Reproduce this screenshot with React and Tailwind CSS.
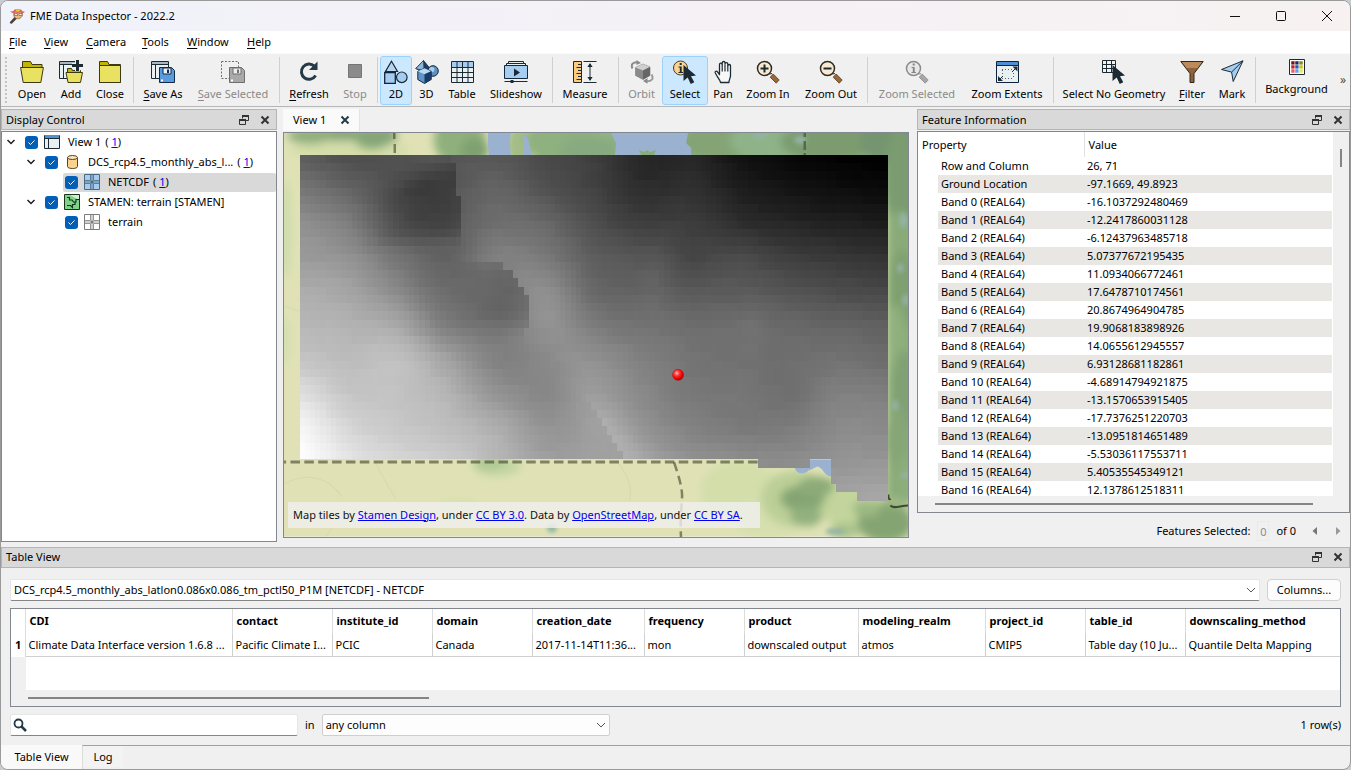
import React, { useMemo } from 'react';
import clsx from 'clsx';

/* ---------- toolbar drawings ---------- */

const INK = '#1c2b33';

function Svg({ children, size = 24, className }) {
  return (
    <svg
      width={size}
      height={size}
      viewBox={`0 0 ${size} ${size}`}
      fill="none"
      aria-hidden="true"
      className={clsx('block shrink-0', className)}
    >
      {children}
    </svg>
  );
}

const OpenIcon = () => (
  <Svg>
    <path d="M2.5 8V1.5h8l1.5 3h10V8" fill="#c4b400" stroke="#3b3a12" />
    <path d="M.6 7.5h22.8l-2.6 15H3.2z" fill="#e9e261" stroke="#3b3a12" />
  </Svg>
);

const CloseIcon = () => (
  <Svg>
    <path d="M1.5 22.5v-21h8l1.5 3h11.500v18z" fill="#c4b400" stroke="#3b3a12" />
    <path d="M1.500 5.500h21v17h-21z" fill="#e9e261" stroke="#3b3a12" />
  </Svg>
);

const AddIcon = () => (
  <Svg>
    <path d="M.5 1.500h17v17H.5z" fill="#e9f0f2" stroke={INK} />
    <path d="M1 2h16v2.500H1z" fill="#a9b6bf" />
    <path d="M.5 4.500h17M4.500 4.500v14" stroke={INK} />
    <path d="M8.500 12V8.500h4l1 2h8V12" fill="#c4b400" stroke="#3b3a12" />
    <path d="M7 12.500h16.500l-2 10H9z" fill="#e9e261" stroke="#3b3a12" />
    <path d="M13 5.500h11M18.500 0v11" stroke="#f0f0f0" strokeWidth="5" />
    <path d="M13 5.500h11M18.500 0v11" stroke={INK} strokeWidth="3" />
  </Svg>
);

const Floppy = ({ body, edge, label }) => (
  <>
    <path d="M8.500 7.500h12l3 3v12h-15z" fill={body} stroke={edge} />
    <path d="M12 8h8v6h-8z" fill={label} stroke={edge} />
    <path d="M16 9.500h2v3.500h-2z" fill={edge} />
    <path d="M10 19.500h2v2h-2z" fill="#fff" />
  </>
);

const SaveAsIcon = () => (
  <Svg>
    <path d="M.5 1.500h17v17H.5z" fill="#e9f0f2" stroke={INK} />
    <path d="M1 2h16v2.500H1z" fill="#a9b6bf" />
    <path d="M.5 4.500h17M4.500 4.500v14" stroke={INK} />
    <Floppy body="#5a9bdc" edge="#0f2a4a" label="#eef3f7" />
  </Svg>
);

const SaveSelectedIcon = () => (
  <Svg>
    <path d="M.5 1.500h17v17H.5z" stroke="#6f6f6f" strokeDasharray="2 1.500" />
    <Floppy body="#a9a9a9" edge="#6f6f6f" label="#ededed" />
  </Svg>
);

const RefreshIcon = () => (
  <Svg>
    <path d="M18.600 15.500A7.600 7.600 0 1 1 17.300 6.200" stroke="#253a47" strokeWidth="3" />
    <path d="M20.500 1.500v8.500H12z" fill="#253a47" />
  </Svg>
);

const StopIcon = () => (
  <Svg>
    <path d="M5.500 4.500h13v13h-13z" fill="#8b8b8b" stroke="#757575" />
  </Svg>
);

const TwoDIcon = () => (
  <Svg>
    <path d="M7.500 1.300 13.500 11.500h-12z" fill="#b8d6ef" stroke={INK} strokeWidth="1.200" />
    <path d="M.7 12.700h10.600v10.600H.7z" fill="#a5cdf2" stroke="#12233a" strokeWidth="1.300" />
    <circle cx="17.800" cy="17.300" r="5.300" fill="#a5cdf2" stroke={INK} strokeWidth="1.200" />
  </Svg>
);

const ThreeDIcon = () => (
  <Svg>
    <path d="M8.500.5 15 8.500 8 12 .8 8.500z" fill="#1d3f66" stroke="#13283c" strokeWidth=".8" />
    <path d="M8.500.5 9 11 .8 8.500z" fill="#8cb7dd" stroke="#13283c" strokeWidth=".6" />
    <circle cx="18" cy="11" r="5.300" fill="#5d8fc0" stroke="#13283c" />
    <circle cx="16.800" cy="9.600" r="2.600" fill="#a9cdeb" />
    <path d="M2.800 11.300 9.500 8.200l6.700 3.100v8.200l-6.700 4-6.700-4z" fill="#5f94ca" stroke="#13283c" />
    <path d="M2.800 11.300 9.500 14.300l6.700-3-6.700-3.100z" fill="#b9daf3" />
    <path d="M9.500 14.300v9.200l6.700-4v-8.200z" fill="#173a66" />
  </Svg>
);

const TableIcon = () => (
  <Svg>
    <path d="M1.500 1.500h22v21h-22z" fill="#e9f0f2" />
    <path d="M1.500 1.500h22v6h-22z" fill="#a5cdf2" />
    <path
      d="M1.500 1.500h22v21h-22zM1.500 7.500h22M1.500 12.500h22M1.500 17.500h22M7 1.500v21M12.500 1.500v21M18 1.500v21"
      stroke={INK}
    />
  </Svg>
);

const SlideshowIcon = () => (
  <Svg>
    <path d="M4.500 3.500v-2h15v2M2.500 5.500v-2h19v2" fill="#e9f0f2" stroke={INK} />
    <path d="M.5 5.500h23v13H.5z" fill="#a5cdf2" stroke="#13283c" />
    <path d="m10 8.500 6 4-6 4z" fill={INK} />
    <path d="M.5 21.500h23" stroke={INK} />
    <path d="M6.500 20h3v3h-3z" fill={INK} />
  </Svg>
);

const MeasureIcon = () => (
  <Svg>
    <path d="M.5 1.500h8v21h-8z" fill="#fccb7c" stroke={INK} />
    <path d="M5 4.500h3.500M3.500 7.500h5M5 10.500h3.500M3.500 13.500h5M5 16.500h3.500M3.500 19.500h5" stroke={INK} />
    <path d="M10.500 1.500h13M10.500 22.500h13M17 4v16" stroke={INK} />
    <path d="m17 3 2.600 4h-5.200zM17 21l2.600-4h-5.200z" fill={INK} />
  </Svg>
);

const OrbitIcon = () => (
  <Svg>
    <path d="M5.500 7.500 13 4l7 3v8.500l-7 4-7.500-4z" fill="#8a8a8a" stroke="#777" strokeWidth=".6" />
    <path d="M5.500 7.500 13 4l7 3-7 3.500z" fill="#cfcfcf" />
    <path d="M13 10.500v9l7-4V7z" fill="#666" />
    <path d="M2.500 8.500C.5 4.500 3 1.800 8 2.200" stroke="#8a8a8a" strokeWidth="2" />
    <path d="M6.500 0 11 3 6.500 5z" fill="#8a8a8a" />
    <path d="M21.500 14.500c2.500 4 .5 7-5 6.800" stroke="#9a9a9a" strokeWidth="2" />
    <path d="M17.500 18v5.800L13 21z" fill="#8a8a8a" />
  </Svg>
);

const Cursor = () => (
  <path d="M10.500 5 23 15.500l-5 .7 3.300 6.100-3.600 1.600-3-6.300-4.200 3.300z" fill={INK} />
);

const SelectIcon = () => (
  <Svg>
    <circle cx="7.500" cy="8" r="7" fill="#fbd28f" stroke="#4a3b23" />
    <path d="M6.700 3h2v2h-2zM5.500 6.500h3.200V12H10v1H5.500v-1h1.300V7.500H5.500z" fill={INK} />
    <Cursor />
  </Svg>
);

const PanIcon = () => (
  <Svg>
    <path
      d="M8 22.500c-.3-2.300-1.500-3.500-2.800-5.300L2.700 12.800c-.6-1.500 1.400-2.300 2.300-1l2 2.800V4.500c0-1.900 2.600-1.900 2.700 0V3c0-2 2.800-2 2.800 0v1c.1-2 2.800-1.800 2.800.1v1.600c.2-1.700 2.700-1.600 2.700.3v9.500c0 2.700-1.500 4-1.600 7z"
      transform="translate(1.500 0)"
      fill="#f7f8f8"
      stroke={INK}
      strokeWidth="1.300"
      strokeLinejoin="round"
    />
    <path d="M11.200 4.500v7M14 4.500v7M16.800 5.500v6" stroke={INK} strokeWidth="1.200" />
  </Svg>
);

function Magnifier({ children, rim = '#2f2a25', glass = '#f8ead0', handle = '#96683c', edge = '#5a3c1e' }) {
  return (
    <Svg>
      <circle cx="8.500" cy="8.500" r="7" fill={glass} stroke={rim} strokeWidth="1.500" />
      <path d="m13.500 14 2.500-.5" stroke={rim} strokeWidth="1.200" />
      <path d="m17.200 14 6 6-3 3.200-6-6z" fill={handle} stroke={edge} strokeWidth=".8" />
      {children}
    </Svg>
  );
}

const ZoomInIcon = () => (
  <Magnifier>
    <path d="M4.500 8.500h8M8.500 4.500v8" stroke={INK} strokeWidth="2" />
  </Magnifier>
);

const ZoomOutIcon = () => (
  <Magnifier>
    <path d="M4.500 8.500h8" stroke={INK} strokeWidth="2" />
  </Magnifier>
);

const ZoomSelectedIcon = () => (
  <Magnifier rim="#8b8b8b" glass="#e8e8e8" handle="#a6a6a6" edge="#8b8b8b">
    <path d="M7.700 3.500h2v2h-2zM6.500 7h3.200v5H11v1H6.500v-1h1.300V8H6.500z" fill="#858585" />
  </Magnifier>
);

const ZoomExtentsIcon = () => (
  <Svg>
    <path d="M1.500 1.500h22v21h-22z" fill="#e9f0f2" stroke="#10233c" />
    <path d="M2 2h21v3H2z" fill="#4f8fd6" />
    <path d="M1.500 5.500h22" stroke="#10233c" />
    <path d="M7 9.500h10M18.500 10v8M7 18.500h10M7.500 10v8" stroke="#55636c" strokeDasharray="1 2" />
    <path d="M17.500 6.500h5v5zM3 16v5h5z" fill={INK} />
    <path d="m17 12 4-4M4 20l4-4" stroke={INK} />
  </Svg>
);

const SelectNoGeometryIcon = () => (
  <Svg>
    <path d="M.5.500h13v12H.5z" fill="#f2f2f2" />
    <path d="M.5.500h13v12H.5zM.5 4.500h13M.5 8.500h13M4.500.500v12M9.500.500v12" stroke={INK} />
    <Cursor />
  </Svg>
);

const FilterIcon = () => (
  <Svg>
    <path d="M.8 1.500h22.400L14 13.500v9h-4v-9z" fill="#8e623a" />
    <path d="M1.500 1.500h21L18 8H6z" fill="#bb8b5c" />
    <path d="M.8 1.500h22.400L14 13.500v9h-4v-9z" stroke="#33261a" />
  </Svg>
);

const MarkIcon = () => (
  <Svg>
    <path d="M23 .8 13.200 21.500l-1.600-9.400L1.500 9.500z" fill="#a5cdf2" stroke={INK} strokeLinejoin="round" />
    <path d="M23 .8 11.600 12.100" stroke={INK} />
  </Svg>
);

const SWATCHES = [
  ['#7c0f12', '#16305f', '#8e8a12'],
  ['#c22327', '#1f5fae', '#cfc322'],
  ['#f25c5c', '#5ba1ec', '#ede55a'],
];

const BackgroundIcon = () => (
  <Svg size={16}>
    <path d="M.5.500h15v15H.5z" fill="#fff" stroke={INK} />
    {SWATCHES.flatMap((row, r) =>
      row.map((color, c) => (
        <rect key={color} x={2 + c * 4} y={2 + r * 4} width="4" height="4" fill={color} stroke="#fff" strokeWidth=".5" />
      )),
    )}
  </Svg>
);

/* ---------- toolbar ---------- */

const TOOLS = [
  { label: 'Open', icon: OpenIcon, width: 'w-[40px]' },
  { label: 'Add', icon: AddIcon, width: 'w-[38px]' },
  { label: 'Close', icon: CloseIcon, width: 'w-[40px]' },
  null,
  { label: 'Save As', icon: SaveAsIcon, width: 'w-[54px]', key: true },
  { label: 'Save Selected', icon: SaveSelectedIcon, width: 'w-[86px]', key: true, off: true },
  null,
  { label: 'Refresh', icon: RefreshIcon, width: 'w-[54px]', key: true },
  { label: 'Stop', icon: StopIcon, width: 'w-[38px]', off: true },
  null,
  { label: '2D', icon: TwoDIcon, width: 'w-[32px]', on: true },
  { label: '3D', icon: ThreeDIcon, width: 'w-[29px]' },
  { label: 'Table', icon: TableIcon, width: 'w-[42px]' },
  { label: 'Slideshow', icon: SlideshowIcon, width: 'w-[66px]' },
  null,
  { label: 'Measure', icon: MeasureIcon, width: 'w-[60px]' },
  null,
  { label: 'Orbit', icon: OrbitIcon, width: 'w-[41px]', off: true },
  { label: 'Select', icon: SelectIcon, width: 'w-[46px]', on: true },
  { label: 'Pan', icon: PanIcon, width: 'w-[30px]' },
  { label: 'Zoom In', icon: ZoomInIcon, width: 'w-[60px]' },
  { label: 'Zoom Out', icon: ZoomOutIcon, width: 'w-[66px]' },
  null,
  { label: 'Zoom Selected', icon: ZoomSelectedIcon, width: 'w-[94px]', off: true },
  { label: 'Zoom Extents', icon: ZoomExtentsIcon, width: 'w-[86px]' },
  null,
  { label: 'Select No Geometry', icon: SelectNoGeometryIcon, width: 'w-[116px]' },
  { label: 'Filter', icon: FilterIcon, width: 'w-[40px]', key: true },
  { label: 'Mark', icon: MarkIcon, width: 'w-[40px]' },
  null,
  { label: 'Background', icon: BackgroundIcon, width: 'w-[77px]', small: true },
];

function Mnemonic({ text }) {
  return (
    <span>
      <span className="underline underline-offset-2">{text[0]}</span>
      {text.slice(1)}
    </span>
  );
}

function Tool({ tool }) {
  const Icon = tool.icon;
  return (
    <button
      type="button"
      disabled={tool.off}
      aria-pressed={tool.on}
      className={clsx(
        'flex h-[49px] shrink-0 flex-col items-center rounded-[3px] border whitespace-nowrap',
        tool.width,
        tool.small ? 'gap-1.5 pt-0.5' : 'gap-0.5 pt-[3px]',
        tool.on ? 'border-[#99d1ff] bg-[#cce8ff]' : 'border-transparent',
        tool.off ? 'text-[#8a8a8a]' : 'text-black',
      )}
    >
      <Icon />
      {tool.key ? <Mnemonic text={tool.label} /> : tool.label}
    </button>
  );
}

function Toolbar() {
  return (
    <div
      role="toolbar"
      className="flex h-[54px] shrink-0 items-center overflow-hidden border-t border-b border-t-[#fafafa] border-b-[#b6b6b6] bg-[#f0f0f0] pr-1 pl-1"
    >
      <span className="mr-[4px] h-[46px] w-[3px] shrink-0 border-l-2 border-dotted border-[#c2c2c2]" />
      {TOOLS.map((tool, i) =>
        tool ? (
          <Tool key={tool.label} tool={tool} />
        ) : (
          <span key={i} className="flex h-[46px] w-[6px] shrink-0 justify-center">
            <span className="w-px bg-[#d0d0d0]" />
          </span>
        ),
      )}
      <button type="button" aria-label="More tools" className="ml-auto text-[12px] text-[#4a4a4a]">
        »
      </button>
    </div>
  );
}

/* ---------- window chrome ---------- */

const AppIcon = () => (
  <Svg size={16}>
    <path d="m1 14 5-5.500 2 2L3 15.500c-1 .8-2.800-.5-2-1.500z" fill="#4a4038" />
    <circle cx="9" cy="6.500" r="4.300" fill="#f3bd98" stroke="#7b6a5c" strokeWidth=".8" />
    <path d="M.8 3.500 4 3.200 5.500 1.500l3-.5 3.500.5 1.500 1.700 2.500.6-2 1.500-3-.8-2 .4-2.500-.4-2.500.8z" fill="#d9695a" />
    <path d="M6.500 1.500h5L10 3.500H7.500z" fill="#f4d03c" />
    <path d="M5.500 5.500h3v2h-3zM10 5.500h3v2h-3z" fill="#fbf3dc" stroke="#8a3b2a" strokeWidth=".6" />
    <path d="M7 8.800h4.500l-2.200 2z" fill="#e4bd2c" />
  </Svg>
);

const FloatIcon = () => (
  <Svg size={10}>
    <path d="M3.500 3.500v-3h6v5h-3" stroke="#333" />
    <path d="M3 1h7" stroke="#333" strokeWidth="2" />
    <path d="M.5 4.500h6v5h-6z" stroke="#333" />
    <path d="M0 5h7" stroke="#333" strokeWidth="2" />
  </Svg>
);

const CrossIcon = ({ color = '#333' }) => (
  <Svg size={10}>
    <path d="m1.500 1.500 7 7M8.500 1.500l-7 7" stroke={color} strokeWidth="2" />
  </Svg>
);

function TitleBar() {
  return (
    <header className="flex h-[30px] shrink-0 items-center bg-linear-to-r from-[#f0f3fa] via-[#f5f1f6] to-[#f7f2f1] pr-[17px] pl-2">
      <AppIcon />
      <h1 className="ml-[5px] grow">FME Data Inspector - 2022.2</h1>
      <div className="flex items-center gap-[34px]">
        <button type="button" aria-label="Minimize">
          <Svg size={12}>
            <path d="M1 6.500h10" stroke="#111" />
          </Svg>
        </button>
        <button type="button" aria-label="Maximize">
          <Svg size={12}>
            <rect x="1.500" y="1.500" width="9" height="9" rx="1" stroke="#111" />
          </Svg>
        </button>
        <button type="button" aria-label="Close window">
          <Svg size={12}>
            <path d="m1 1 10 10M11 1 1 11" stroke="#111" />
          </Svg>
        </button>
      </div>
    </header>
  );
}

const MENUS = [
  ['File', 'w-[35px]'],
  ['View', 'w-[42px]'],
  ['Camera', 'w-[56px]'],
  ['Tools', 'w-[45px]'],
  ['Window', 'w-[60px]'],
  ['Help', 'w-[40px]'],
];

function MenuBar() {
  return (
    <nav className="flex h-[22px] shrink-0 items-center bg-white pl-2">
      {MENUS.map(([name, width]) => (
        <button key={name} type="button" className={clsx('text-left', width)}>
          <Mnemonic text={name} />
        </button>
      ))}
    </nav>
  );
}

function DockTitle({ children }) {
  return (
    <div className="flex h-[21px] shrink-0 items-center gap-[11px] border border-[#b5b5b5] bg-[#d9d9d9] pr-[6px] pl-1">
      <h2 className="grow">{children}</h2>
      <button type="button" aria-label={`Float ${children}`}>
        <FloatIcon />
      </button>
      <button type="button" aria-label={`Close ${children}`}>
        <CrossIcon />
      </button>
    </div>
  );
}

/* ---------- display control ---------- */

const Chevron = ({ color = '#1f1f1f', size = 10 }) => (
  <Svg size={size}>
    <path d="m1.500 3 3.500 3.500L8.500 3" stroke={color} strokeWidth="1.500" />
  </Svg>
);

const ViewIcon = () => (
  <Svg size={16}>
    <path d="M.5 1.500h15v13H.5z" fill="#e9f0f2" stroke={INK} />
    <path d="M1 1h14v3H1z" fill="#4f8fd6" />
    <path d="M.5 4.500h15M4.500 4.500v10" stroke={INK} />
  </Svg>
);

const DatasetIcon = () => (
  <Svg size={16}>
    <path d="M3.500 3.500v9c0 2.700 10 2.700 10 0v-9z" fill="#fbd28f" stroke="#5a4322" />
    <ellipse cx="8.500" cy="3.500" rx="5" ry="2" fill="#fde3b6" stroke="#5a4322" />
  </Svg>
);

const TerrainIcon = () => (
  <Svg size={16}>
    <path d="M.5.500h15v15H.5z" fill="#7fd48a" stroke="#16351c" />
    <path d="M6 1h9v5z" fill="#d3eed4" />
    <path
      d="M3 3.500h2.500V6H8l1.500 2H12V5.500h3M3 11.500h3.500l2 2v-3h2.500V8"
      stroke="#16351c"
      strokeWidth="1.200"
    />
  </Svg>
);

const RasterIcon = ({ fill, line, edge }) => (
  <Svg size={16}>
    <path d="M.5.500h15v15H.5z" fill={fill} stroke={edge} />
    <path d="M6.500 0v6.500H0M9.500 0v6.500H16M0 9.500h6.500V16M16 9.500H9.500V16" stroke={edge} strokeWidth=".8" />
    <path d="M8 1v14M1 8h14" stroke={line} strokeWidth="2" />
    <circle cx="8" cy="8" r="1.500" fill={edge} />
  </Svg>
);

const TREE = [
  { id: 'view', label: 'View 1', count: 1, indent: 'pl-1', icon: <ViewIcon />, open: true },
  { id: 'dcs', label: 'DCS_rcp4.5_monthly_abs_l...', count: 1, indent: 'pl-6', icon: <DatasetIcon />, open: true },
  {
    id: 'netcdf',
    label: 'NETCDF',
    count: 1,
    indent: 'pl-11',
    icon: <RasterIcon fill="#a5cdf2" line="#7fa5c2" edge="#4b6a80" />,
    selected: true,
  },
  { id: 'stamen', label: 'STAMEN: terrain [STAMEN]', indent: 'pl-6', icon: <TerrainIcon />, open: true },
  { id: 'terrain', label: 'terrain', indent: 'pl-11', icon: <RasterIcon fill="#fff" line="#cfcfcf" edge="#7b7b7b" /> },
];

function TreeRow({ node }) {
  return (
    <li className={clsx('flex h-5 items-center', node.indent)}>
      <span className="flex w-[17px] shrink-0 justify-start">
        {node.open && (
          <button type="button" aria-label={`Collapse ${node.label}`}>
            <Chevron />
          </button>
        )}
      </span>
      <div
        className={clsx(
          'flex h-[19px] min-w-0 grow items-center rounded-[2px] pl-[2px] whitespace-nowrap',
          node.selected && 'bg-[#d9d9d9]',
        )}
      >
        <span className="relative flex shrink-0">
          <input
            id={`tree-${node.id}`}
            type="checkbox"
            defaultChecked
            className="size-[13px] appearance-none rounded-[3px] bg-[#005fb8]"
          />
          <svg
            viewBox="0 0 13 13"
            fill="none"
            aria-hidden="true"
            className="pointer-events-none absolute inset-0 size-[13px]"
          >
            <path d="m3.500 6.500 2 2 4-4" stroke="#fff" />
          </svg>
        </span>
        <label htmlFor={`tree-${node.id}`} className="ml-[6px] flex items-center gap-2">
          {node.icon}
          {node.label}
        </label>
        {node.count && (
          <span className="ml-[4px]">
            ({' '}
            <a href="#features" className="text-[#0000ee] underline">
              {node.count}
            </a>
            )
          </span>
        )}
      </div>
    </li>
  );
}

function DisplayControl() {
  return (
    <section className="flex w-[276px] shrink-0 flex-col gap-px">
      <DockTitle>Display Control</DockTitle>
      <ul className="grow border border-[#828790] bg-white">
        {TREE.map((node) => (
          <TreeRow key={node.id} node={node} />
        ))}
      </ul>
    </section>
  );
}

/* ---------- map ---------- */

const RASTER = { x: 300, y: 155, cols: 113, rows: 42, cw: 588 / 113, ch: 304 / 37 };

// Grey levels sampled every 49 units across and 34 units down.
const LEVELS = [
  [92, 78, 80, 86, 86, 74, 62, 38, 38, 18, 8, 2, 0],
  [118, 100, 84, 86, 100, 82, 66, 46, 48, 30, 20, 14, 10],
  [144, 125, 98, 92, 110, 104, 78, 62, 62, 46, 38, 32, 28],
  [154, 146, 116, 98, 126, 120, 94, 84, 74, 74, 62, 56, 50],
  [172, 164, 138, 108, 124, 138, 104, 98, 92, 90, 84, 76, 72],
  [184, 178, 168, 126, 124, 142, 122, 114, 110, 108, 104, 100, 96],
  [196, 188, 192, 162, 130, 136, 140, 128, 116, 112, 110, 114, 108],
  [222, 198, 194, 180, 148, 136, 150, 136, 120, 118, 112, 128, 126],
  [246, 214, 200, 190, 174, 148, 156, 144, 130, 122, 124, 138, 138],
  [255, 230, 214, 204, 184, 160, 160, 156, 146, 142, 140, 148, 150],
  [255, 240, 220, 210, 190, 165, 170, 165, 155, 150, 152, 162, 166],
];

const clamp = (v, lo, hi) => Math.min(hi, Math.max(lo, v));

const ramp = (a, b, v) => {
  const t = clamp((v - a) / (b - a), 0, 1);
  return t * t * (3 - 2 * t);
};

const spline = (a, b, c, d, t) =>
  b + 0.5 * t * (c - a + t * (2 * a - 5 * b + 4 * c - d + t * (3 * (b - c) + d - a)));

function baseLevel(x, y) {
  const gx = (x - 300) / 49;
  const gy = (y - 155) / 34;
  const ix = Math.floor(gx);
  const iy = Math.floor(gy);
  const row = (r) => {
    const line = LEVELS[clamp(r, 0, LEVELS.length - 1)];
    const at = (c) => line[clamp(c, 0, 12)];
    return spline(at(ix - 1), at(ix), at(ix + 1), at(ix + 2), gx - ix);
  };
  return spline(row(iy - 1), row(iy), row(iy + 1), row(iy + 2), gy - iy);
}

function level(x, y) {
  let v = baseLevel(x, y);
  // northern upland
  const northEdge = y < 163 ? 452 : y < 195 ? 457 : 462;
  if (x < northEdge) {
    const reach = ramp(350, 430, x + (y - 190) * 0.2) * ramp(156, 186, y + (x - 430) * 0.35);
    v -= 25 * reach * (1 - ramp(222, 252, y + (x - 440) * 0.1));
  }
  // southern upland
  const southEdge = y < 262 ? 0 : y < 270 ? 505 : y < 279 ? 511 : y < 287 ? 521 : y < 295 ? 526 : y < 329 ? 531 : 525;
  if (x < southEdge) {
    v -= 30 * ramp(445, 520, x + (y - 290) * 0.1) * (1 - ramp(305, 345, y)) * (0.8 + 0.2 * ramp(262, 275, y));
  }
  // valley running south-east
  const axis = y < 300 ? 508 + (y - 245) * 0.7 : y < 380 ? 546 + (y - 300) * 0.4 : 578 + (y - 380) * 0.58;
  const d = x - axis;
  v += ramp(225, 310, y) * (d < 0 ? 5 * Math.exp(-(d * d) / 260) : 6 * Math.exp(-(d * d) / 1400));
  if (y > 390) v += ramp(390, 430, y) * (d >= 0 ? 14 * Math.exp(-(d * d) / 700) : 0);
  // central lowland
  v -= 4 * Math.exp(-((x - 692) ** 2 / 300 + (y - 268) ** 2 / 1800));
  v += 6 * Math.exp(-((x - 656) ** 2 / 200 + (y - 275) ** 2 / 1600));
  v += 5 * Math.exp(-((x - 752) ** 2 / 200 + (y - 325) ** 2 / 900));
  const grain = ((Math.round(x) * 7 + Math.round(y) * 13) % 5) - 2;
  return Math.round(clamp(v + grain * 0.5, 0, 255));
}

function inCoverage(col, row) {
  const x = RASTER.x + (col + 0.5) * RASTER.cw;
  if (row < 37) return true;
  if (row === 37) return (x > 760 && x < 809) || x > 830;
  if (row < 40) return x > 830;
  if (row === 40) return x > 836;
  return x > 857;
}

function RasterLayer() {
  const cells = useMemo(() => {
    const out = [];
    for (let r = 0; r < RASTER.rows; r += 1) {
      for (let c = 0; c < RASTER.cols; c += 1) {
        if (!inCoverage(c, r)) continue;
        const x = RASTER.x + c * RASTER.cw;
        const y = RASTER.y + r * RASTER.ch;
        const g = level(x + RASTER.cw / 2, y + RASTER.ch / 2);
        out.push(
          <rect key={`${c}-${r}`} x={x} y={y} width={RASTER.cw} height={RASTER.ch} fill={`rgb(${g},${g},${g})`} />,
        );
      }
    }
    return out;
  }, []);
  return <g shapeRendering="crispEdges">{cells}</g>;
}

const FOREST = [
  [340, 134, 50, 7, '#86a677'], [310, 136, 22, 8, '#8fae7c'], [372, 142, 16, 8, '#8fb07f'], [378, 136, 20, 10, '#86a677'],
  [460, 140, 26, 26, '#8fb07d'], [475, 150, 14, 12, '#7fa070'], [520, 145, 14, 20, '#a2bd85'], [560, 140, 34, 22, '#8fb07f'],
  [590, 150, 30, 14, '#88aa80'], [645, 153, 10, 3, '#86a677'], [720, 142, 40, 20, '#84a476'], [770, 140, 40, 22, '#8fb388'],
  [830, 142, 50, 20, '#7c9c70'], [890, 140, 30, 26, '#759470'], [900, 180, 18, 50, '#7a9c70'], [898, 240, 12, 30, '#8aab78'],
  [902, 290, 14, 40, '#7fa070'], [896, 340, 10, 36, '#8fb07d'], [904, 390, 12, 40, '#7fa173'], [896, 440, 12, 34, '#86a677'],
  [905, 480, 10, 26, '#8cae7a'], [802, 498, 22, 13, '#84a572'], [816, 486, 18, 10, '#8cab78'], [806, 516, 16, 10, '#92b17e'],
  [885, 522, 28, 20, '#84a572'], [866, 508, 14, 8, '#9dba84'], [845, 530, 14, 8, '#a8c28c'],
];

const PASTURE = [
  [350, 150, 60, 10, '#d3ddaa'], [286, 230, 6, 50, '#cddcaa'], [284, 340, 8, 24, '#d6dfb0'], [497, 466, 24, 10, '#c3d6a2'],
  [490, 462, 16, 7, '#aec791'], [740, 490, 40, 30, '#d3deab'], [770, 515, 40, 22, '#d6dfae'], [860, 500, 40, 34, '#c3d59c'],
  [460, 505, 20, 8, '#d8e0b0'], [795, 498, 34, 28, '#bccf97'],
];

const PONDS = [
  [800, 140, 6, 4], [760, 136, 8, 3], [903, 220, 4, 8], [900, 268, 3, 5], [905, 300, 3, 6], [895, 405, 3, 5],
  [905, 475, 5, 3], [552, 528, 5, 4], [835, 531, 10, 3],
];

function MapCanvas() {
  return (
    <svg
      viewBox="284 133 624 403"
      preserveAspectRatio="xMidYMid slice"
      role="img"
      aria-label="Map of monthly values over terrain"
      className="absolute inset-0 size-full"
    >
      <defs>
        <filter id="soft" x="-50%" y="-50%" width="200%" height="200%">
          <feGaussianBlur stdDeviation="4" />
        </filter>
        <filter id="fine" x="-50%" y="-50%" width="200%" height="200%">
          <feGaussianBlur stdDeviation="2" />
        </filter>
        <radialGradient id="marker" cx="38%" cy="35%" r="65%">
          <stop offset="0" stopColor="#ffb3b3" />
          <stop offset=".4" stopColor="#ff3030" />
          <stop offset=".75" stopColor="#f00000" />
          <stop offset="1" stopColor="#a80000" />
        </radialGradient>
      </defs>
      <rect x="284" y="133" width="624" height="403" fill="#e0e2b5" />
      <g filter="url(#soft)">
        {PASTURE.map(([cx, cy, rx, ry, fill]) => (
          <ellipse key={`${cx}-${cy}`} cx={cx} cy={cy} rx={rx} ry={ry} fill={fill} />
        ))}
        <rect x="535" y="120" width="400" height="50" fill="#93b383" />
        <rect x="886" y="120" width="50" height="380" fill="#8aab79" />
        {FOREST.map(([cx, cy, rx, ry, fill]) => (
          <ellipse key={`${cx}-${cy}`} cx={cx} cy={cy} rx={rx} ry={ry} fill={fill} />
        ))}
      </g>
      <g filter="url(#fine)" fill="#93b3a4">
        {PONDS.map(([cx, cy, rx, ry]) => (
          <ellipse key={`${cx}-${cy}`} cx={cx} cy={cy} rx={rx} ry={ry} />
        ))}
      </g>
      <g fill="#9ab1cf">
        <path d="M488 133h23l-1 10 1 12h-22l-1-9z" />
        <path d="m523 137 3-3 3 8 3 13h-9z" />
        <path d="m611 133 77 0-2 10 5 5v7h-76l1-12z" />
        <path d="M794 466h16c-1 8-14 10-16 0zM809 459h22v17c-7 0-8-9-14-10l-8 4z" />
      </g>
      <path d="m641 155-2-5 5 2 3-2 3 2 6-2-2 5z" fill="#8cab78" />
      <g stroke="#cfcfa4" strokeWidth="1" fill="none" opacity=".5">
        <path d="M284 306c8 2 12 4 16 5M376 462c8 18 14 26 20 36M618 462c10 14 14 22 12 38M284 484c24-14 46-6 58 12M326 536c14-22 40-28 62-24" />
      </g>
      <g stroke="#44462f" strokeOpacity=".62" fill="none">
        <path d="M277 461.500h486" strokeWidth="3" strokeDasharray="9.500 4.350" />
        <path d="M394.500 133v6M395 144v9" strokeWidth="2.500" />
        <path d="M804.500 133v4M804.500 141v9M804.500 153v3" strokeWidth="2.500" />
        <path d="M674 462c4 12 8 24 8 34-1 14-2 28-1 42" strokeWidth="2.500" strokeDasharray="9 5" />
      </g>
      <path d="M888 494c0 4 1 6 2 4M890 505c3 4 10 0 18 0" stroke="#3d4a2f" strokeWidth="2" fill="none" />
      <RasterLayer />
      <circle cx="678" cy="374.500" r="5.500" fill="url(#marker)" stroke="#c40000" strokeWidth=".5" />
    </svg>
  );
}

function MapLink({ children }) {
  return (
    <a href="#attribution" className="text-[#0000ee] underline">
      {children}
    </a>
  );
}

function MapView() {
  return (
    <section className="flex min-w-0 grow flex-col pr-0.5 pb-1">
      <div role="tablist" className="flex h-[23px] shrink-0">
        <div className="flex h-[22px] items-center gap-[14px] border-r border-[#e3e3e3] bg-[#fafafa] pr-[9px] pl-[10px]">
          <button type="button" role="tab" aria-selected="true">
            View 1
          </button>
          <button type="button" aria-label="Close View 1">
            <CrossIcon color="#253a47" />
          </button>
        </div>
      </div>
      <div className="relative grow overflow-hidden border border-[#828790]">
        <MapCanvas />
        <p className="absolute bottom-[9px] left-1 flex h-[26px] w-[472px] items-center bg-[#f0f0f0]/80 px-[5px] whitespace-pre text-[#111]">
          Map tiles by <MapLink>Stamen Design</MapLink>, under <MapLink>CC BY 3.0</MapLink>. Data by{' '}
          <MapLink>OpenStreetMap</MapLink>, under <MapLink>CC BY SA</MapLink>.
        </p>
      </div>
    </section>
  );
}

/* ---------- feature information ---------- */

const PROPERTIES = [
  ['Row and Column', '26, 71'],
  ['Ground Location', '-97.1669, 49.8923'],
  ['Band 0 (REAL64)', '-16.1037292480469'],
  ['Band 1 (REAL64)', '-12.2417860031128'],
  ['Band 2 (REAL64)', '-6.12437963485718'],
  ['Band 3 (REAL64)', '5.07377672195435'],
  ['Band 4 (REAL64)', '11.0934066772461'],
  ['Band 5 (REAL64)', '17.6478710174561'],
  ['Band 6 (REAL64)', '20.8674964904785'],
  ['Band 7 (REAL64)', '19.9068183898926'],
  ['Band 8 (REAL64)', '14.0655612945557'],
  ['Band 9 (REAL64)', '6.93128681182861'],
  ['Band 10 (REAL64)', '-4.68914794921875'],
  ['Band 11 (REAL64)', '-13.1570653915405'],
  ['Band 12 (REAL64)', '-17.7376251220703'],
  ['Band 13 (REAL64)', '-13.0951814651489'],
  ['Band 14 (REAL64)', '-5.53036117553711'],
  ['Band 15 (REAL64)', '5.40535545349121'],
  ['Band 16 (REAL64)', '12.1378612518311'],
];

function FeatureInformation() {
  return (
    <section className="flex w-[433px] shrink-0 flex-col">
      <DockTitle>Feature Information</DockTitle>
      <div className="mt-px flex h-[382px] flex-col border border-[#828790] bg-[#f0f0f0]">
        <div className="flex min-h-0 grow">
          <div className="min-w-0 grow overflow-hidden bg-white pr-px">
            <table className="w-full table-fixed border-collapse text-left">
              <colgroup>
                <col className="w-[20px]" />
                <col className="w-[146px]" />
                <col />
              </colgroup>
              <thead>
                <tr className="h-[25px]">
                  <th colSpan={2} className="border-r border-[#e0e0e0] pl-1 font-normal">
                    Property
                  </th>
                  <th className="pl-1 font-normal">Value</th>
                </tr>
              </thead>
              <tbody>
                {PROPERTIES.map(([name, value], i) => (
                  <tr key={name} className="h-[18px]">
                    <td />
                    <td className={clsx('pl-[3px]', i % 2 === 1 && 'bg-[#e9e7e3]')}>{name}</td>
                    <td className={clsx('pl-[3px]', i % 2 === 1 && 'bg-[#e9e7e3]')}>{value}</td>
                  </tr>
                ))}
              </tbody>
            </table>
          </div>
          <div className="flex w-4 shrink-0 justify-center pt-[17px]">
            <span className="h-[18px] w-[2px] bg-[#858585]" />
          </div>
        </div>
        <div className="flex h-4 shrink-0 items-center pr-9 pl-[17px]">
          <span className="h-[2px] grow bg-[#858585]" />
        </div>
      </div>
      <div className="flex grow items-center justify-end gap-[7px] pt-2 pr-2">
        <label htmlFor="selected-feature">Features Selected:</label>
        <input
          id="selected-feature"
          disabled
          defaultValue="0"
          className="h-5 w-3 border border-[#eaeaea] text-center text-[#8a8a8a]"
        />
        <span>of 0</span>
        <button type="button" aria-label="Previous feature" className="ml-2">
          <Svg size={8}>
            <path d="M6 0v8L1.500 4z" fill="#777" />
          </Svg>
        </button>
        <button type="button" aria-label="Next feature" className="ml-2">
          <Svg size={8}>
            <path d="M2 0v8l4.500-4z" fill="#999" />
          </Svg>
        </button>
      </div>
    </section>
  );
}

/* ---------- table view ---------- */

const COLUMNS = [
  ['CDI', 'Climate Data Interface version 1.6.8 ...', 'w-[207px]'],
  ['contact', 'Pacific Climate I...', 'w-[100px]'],
  ['institute_id', 'PCIC', 'w-[100px]'],
  ['domain', 'Canada', 'w-[100px]'],
  ['creation_date', '2017-11-14T11:36...', 'w-[112px]'],
  ['frequency', 'mon', 'w-[100px]'],
  ['product', 'downscaled output', 'w-[114px]'],
  ['modeling_realm', 'atmos', 'w-[127px]'],
  ['project_id', 'CMIP5', 'w-[100px]'],
  ['table_id', 'Table day (10 Ju...', 'w-[100px]'],
  ['downscaling_method', 'Quantile Delta Mapping', ''],
];

function ComboBox({ label, value, className, boxClass }) {
  return (
    <div className={clsx('relative flex', className)}>
      <select
        aria-label={label}
        className={clsx('h-[22px] w-full appearance-none rounded-[2px] border px-[3px] outline-none', boxClass)}
      >
        <option>{value}</option>
      </select>
      <span className="pointer-events-none absolute inset-y-0 right-1 flex items-center">
        <Svg size={10}>
          <path d="m1 3 4 4 4-4" stroke="#555" />
        </Svg>
      </span>
    </div>
  );
}

function TableView() {
  return (
    <section className="flex shrink-0 flex-col">
      <DockTitle>Table View</DockTitle>
      <div className="flex flex-col gap-[7px] px-[9px] pt-[11px] pb-[9px]">
        <div className="flex items-center gap-[7px]">
          <ComboBox
            label="Feature type"
            value="DCS_rcp4.5_monthly_abs_latlon0.086x0.086_tm_pctl50_P1M [NETCDF] - NETCDF"
            className="grow"
            boxClass="border-[#e6e6e6] border-b-[#858585] bg-white"
          />
          <button type="button" className="h-[22px] w-[74px] rounded-[4px] border border-[#d0d0d0] bg-[#fdfdfd]">
            Columns...
          </button>
        </div>
        <div className="flex flex-col border border-[#828790] bg-white">
          <table className="w-full table-fixed border-collapse text-left">
            <colgroup>
              <col className="w-[14px]" />
              {COLUMNS.map(([name, , width]) => (
                <col key={name} className={width} />
              ))}
            </colgroup>
            <thead>
              <tr className="h-[25px]">
                <td className="border-r border-[#dcdcdc]" />
                {COLUMNS.map(([name]) => (
                  <th key={name} className="border-r border-[#dcdcdc] pl-1 font-bold last:border-r-0">
                    {name}
                  </th>
                ))}
              </tr>
            </thead>
            <tbody>
              <tr className="h-[23px]">
                <th className="border-r border-[#dcdcdc] pl-1 font-bold">1</th>
                {COLUMNS.map(([name, value]) => (
                  <td
                    key={name}
                    className="overflow-hidden border-r border-b border-[#d0d0d0] pl-[3px] whitespace-nowrap last:border-r-0"
                  >
                    {value}
                  </td>
                ))}
              </tr>
            </tbody>
          </table>
          <div className="flex h-[33px]">
            <span className="w-[15px] bg-[#f0f0f0]" />
          </div>
          <div className="flex h-4 items-center bg-[#f0f0f0] pl-[17px]">
            <span className="h-[2px] w-[401px] bg-[#858585]" />
          </div>
        </div>
        <div className="flex items-center">
          <div className="relative flex">
            <input
              type="search"
              aria-label="Search"
              className="h-[22px] w-[288px] rounded-[2px] border border-[#e6e6e6] border-b-[#858585] bg-white pr-1 pl-5 outline-none"
            />
            <span className="pointer-events-none absolute inset-y-0 left-[3px] flex items-center">
              <Svg size={14}>
                <circle cx="5.500" cy="5.500" r="4" stroke="#253a47" strokeWidth="1.800" />
                <path d="m8.500 8.500 4.500 4.500" stroke="#253a47" strokeWidth="2.500" />
              </Svg>
            </span>
          </div>
          <span className="px-[7px]">in</span>
          <ComboBox
            label="Search column"
            value="any column"
            className="w-[288px]"
            boxClass="border-[#cfcfcf] bg-[#fdfdfd]"
          />
          <span className="ml-auto">1 row(s)</span>
        </div>
      </div>
    </section>
  );
}

function BottomTabs() {
  return (
    <div role="tablist" className="flex h-6 shrink-0 items-start">
      <button type="button" role="tab" aria-selected="true" className="h-6 w-[81px] bg-[#f9f9f9]">
        Table View
      </button>
      <div className="flex h-6 grow items-start border-t border-l border-t-[#a0a0a0] border-l-[#dcdcdc]">
        <button type="button" role="tab" aria-selected="false" className="h-[21px] w-10 bg-[#f3f3f3]">
          Log
        </button>
      </div>
    </div>
  );
}

export default function App() {
  return (
    <div className="min-h-screen bg-[#c9ccd2] font-['Noto_Sans','Open_Sans',sans-serif] text-[11px] leading-[16px] text-black">
      <div className="flex min-h-screen flex-col overflow-hidden rounded-lg border border-[#9a9a9a] bg-[#f0f0f0]">
        <TitleBar />
        <MenuBar />
        <Toolbar />
        <main className="flex grow flex-col">
          <div className="flex grow gap-[6px] pt-[2px] pb-[5px]">
            <DisplayControl />
            <MapView />
            <FeatureInformation />
          </div>
          <TableView />
        </main>
        <BottomTabs />
      </div>
    </div>
  );
}
